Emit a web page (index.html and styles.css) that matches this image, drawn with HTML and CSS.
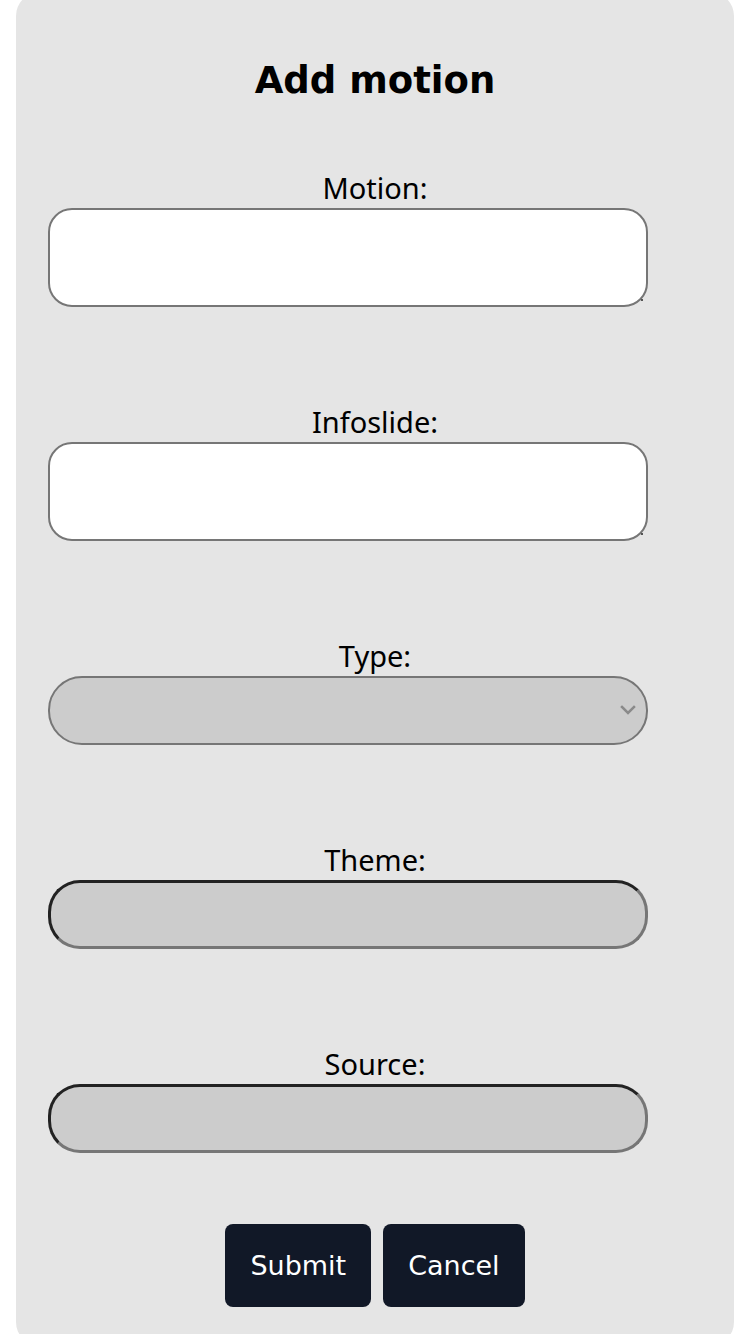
FILE: index.html
```html
<!DOCTYPE html>
<html lang="en">
<head>
<meta charset="utf-8">
<title>Add motion</title>
<link rel="stylesheet" href="styles.css">
</head>
<body>
<form class="card">
  <h2 class="title">Add motion</h2>
  <div class="group">
    <label class="label" for="motion">Motion:</label>
    <div class="area-wrap">
      <textarea id="motion" class="area"></textarea>
      <span class="grip"></span>
    </div>
  </div>
  <div class="group">
    <label class="label" for="infoslide">Infoslide:</label>
    <div class="area-wrap">
      <textarea id="infoslide" class="area"></textarea>
      <span class="grip"></span>
    </div>
  </div>
  <div class="group">
    <label class="label" for="type">Type:</label>
    <div class="select-wrap">
      <select id="type" class="select"><option></option></select>
      <svg class="chev" width="16" height="10" viewBox="0 0 16 10" aria-hidden="true">
        <path d="M2 2 L8 8 L14 2" fill="none" stroke="#8a8a8a" stroke-width="2.5" stroke-linecap="square" stroke-linejoin="miter"/>
      </svg>
    </div>
  </div>
  <div class="group">
    <label class="label" for="theme">Theme:</label>
    <input id="theme" class="field" type="text">
  </div>
  <div class="group last">
    <label class="label" for="source">Source:</label>
    <input id="source" class="field" type="text">
  </div>
  <div class="actions">
    <button type="button" class="btn">Submit</button>
    <button type="button" class="btn">Cancel</button>
  </div>
</form>
</body>
</html>
```

FILE: styles.css
```css
html, body {
  margin: 0;
  padding: 0;
  background: #ffffff;
  overflow: hidden;
}

.card {
  margin: -8px 16px 0;
  padding: 0 32px 39px;
  background: #e5e5e5;
  border-radius: 24px;
  text-align: center;
  display: flex;
  flex-direction: column;
  align-items: stretch;
}

.title {
  font-family: "DejaVu Sans", sans-serif;
  font-weight: bold;
  font-size: 37px;
  line-height: 43px;
  margin: 67px 0 66px;
  color: #000;
}

.group {
  display: flex;
  flex-direction: column;
  align-items: flex-start;
  margin-bottom: 95px;
}

.group.last {
  margin-bottom: 71px;
}

.label {
  align-self: stretch;
  font-family: "Noto Sans", sans-serif;
  font-size: 29px;
  line-height: 40px;
  color: #000;
}

.area-wrap {
  position: relative;
  width: 600px;
}

.area {
  display: block;
  box-sizing: border-box;
  width: 600px;
  height: 99px;
  margin: 0;
  resize: none;
  background: #fff;
  border: 2px solid #767676;
  border-radius: 24px;
  font-family: "Noto Sans", sans-serif;
}

.grip {
  position: absolute;
  right: 5px;
  bottom: 6px;
  width: 2px;
  height: 2px;
  background: #555;
}

.select-wrap {
  position: relative;
  width: 600px;
}

.select {
  display: block;
  box-sizing: border-box;
  width: 600px;
  height: 69px;
  margin: 0;
  -webkit-appearance: none;
  appearance: none;
  background-color: #cccccc;
  border: 2px solid #767676;
  border-radius: 34px;
  font-family: "Noto Sans", sans-serif;
  font-size: 20px;
}

.chev {
  position: absolute;
  right: 12px;
  top: 29px;
}

.field {
  display: block;
  box-sizing: border-box;
  width: 600px;
  height: 69px;
  margin: 0;
  background: #cccccc;
  border-style: solid;
  border-width: 3px;
  border-color: #222222 #767676 #767676 #222222;
  border-radius: 32px;
  font-family: "Noto Sans", sans-serif;
  font-size: 20px;
}

.actions {
  display: flex;
  justify-content: center;
  gap: 12px;
}

.btn {
  font-family: "DejaVu Sans", sans-serif;
  font-size: 27px;
  line-height: 31px;
  padding: 26px 25px;
  background: #111827;
  color: #fff;
  border: none;
  border-radius: 8px;
}
```
